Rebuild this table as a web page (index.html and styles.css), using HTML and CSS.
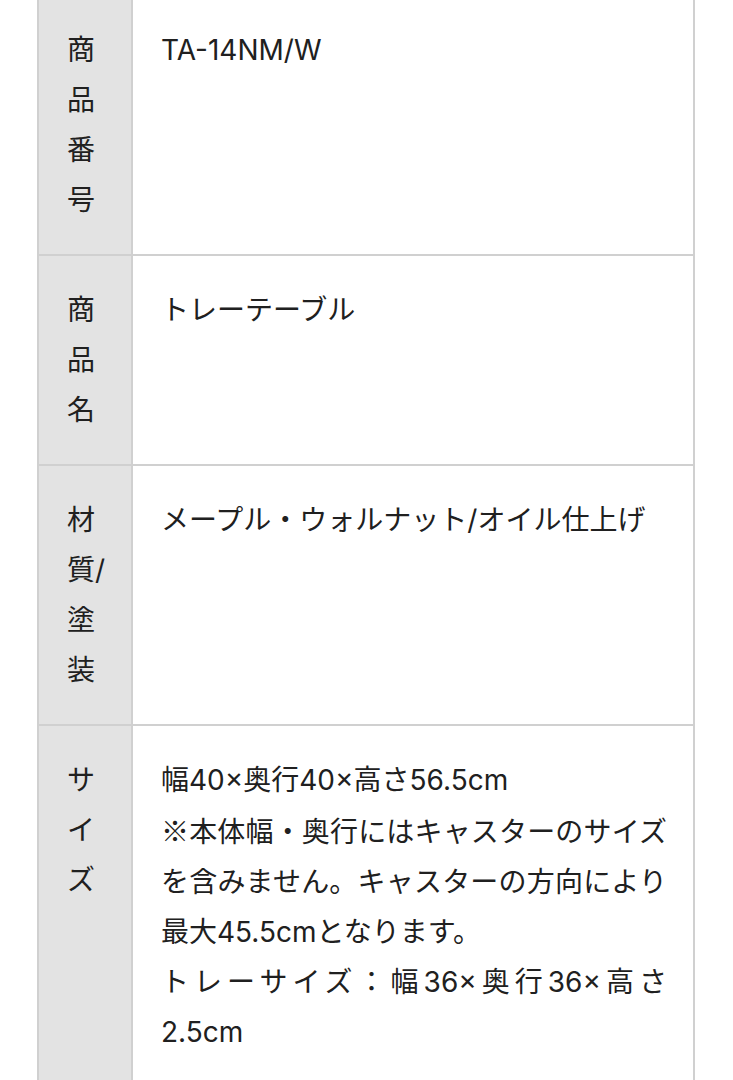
FILE: index.html
```html
<!DOCTYPE html>
<html lang="ja">
<head>
<meta charset="utf-8">
<title>商品仕様</title>
<link rel="stylesheet" href="styles.css">
</head>
<body>
<div class="spec">
  <div class="row">
    <div class="label">商品番号</div>
    <div class="value">TA-14NM/W</div>
  </div>
  <div class="row">
    <div class="label">商品名</div>
    <div class="value">トレーテーブル</div>
  </div>
  <div class="row">
    <div class="label">材質/塗装</div>
    <div class="value">メープル・ウォルナット/オイル仕上げ</div>
  </div>
  <div class="row">
    <div class="label">サイズ</div>
    <div class="value">幅40×奥行40×高さ56.5cm<br><span class="cjk">※本体幅・奥行にはキャスターのサイズ</span>を含みません。キャスターの方向により最大45.5cmとなります。<br>トレーサイズ：幅36×奥行36×高さ2.5cm</div>
  </div>
</div>
</body>
</html>
```

FILE: styles.css
```css
html, body {
  margin: 0;
  padding: 0;
  background: #ffffff;
}

body {
  font-family: "Inter", "Noto Sans CJK JP", sans-serif;
  color: #202020;
  font-size: 28px;
  line-height: 50px;
}

.cjk {
  font-family: "Noto Sans CJK JP", sans-serif;
}

.spec {
  margin: -4px 0 0 37px;
  width: 658px;
  border-left: 2px solid #d0d0d0;
  box-sizing: border-box;
}

.row {
  display: grid;
  grid-template-columns: 94px 562px;
  border-bottom: 2px solid #d0d0d0;
}

.label {
  background: #e3e3e3;
  border-right: 2px solid #d0d0d0;
  padding: 29px 20px 29px 28px;
  text-align: left;
}

.value {
  background: #ffffff;
  border-right: 2px solid #d0d0d0;
  padding: 29px 26px 29px 28px;
  text-align: justify;
}
```
